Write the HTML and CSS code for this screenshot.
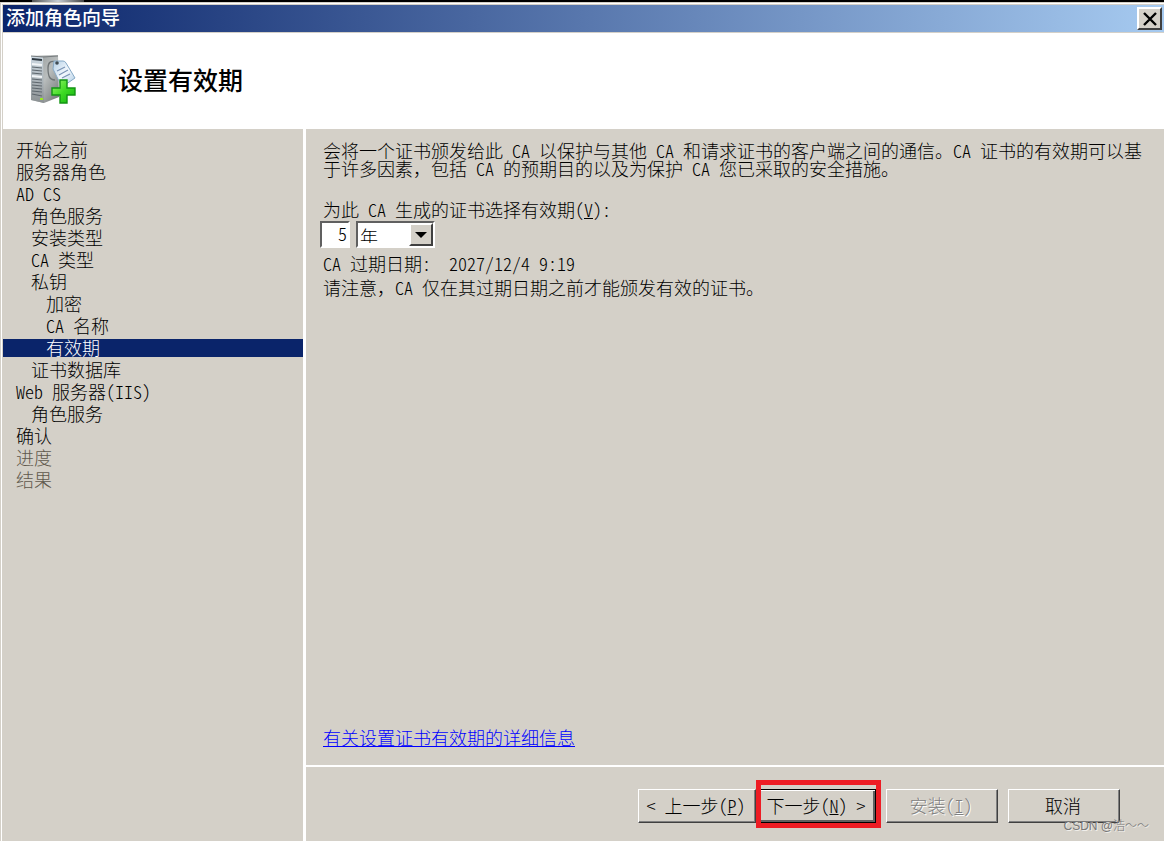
FILE: index.html
```html
<!DOCTYPE html>
<html lang="zh-CN">
<head>
  <meta charset="UTF-8">
  <meta name="viewport" content="width=device-width, initial-scale=1.0">
  <title>添加角色向导</title>
  <link rel="stylesheet" href="styles.css">
</head>
<body>

  <div class="desktop"><span class="desktop-icon"></span></div>

  <div class="window">
    <!-- Title bar -->
    <div class="titlebar">
      <span class="titlebar-text">添加角色向导</span>
      <button class="close" type="button" aria-label="关闭">
        <svg width="14" height="14" viewBox="0 0 14 14"><path d="M1 1 L13 13 M13 1 L1 13" stroke="#000" stroke-width="2.4"/></svg>
      </button>
    </div>

    <!-- Header -->
    <header class="header">
      <svg class="header-icon" width="48" height="50" viewBox="0 0 48 50">
        <defs>
          <linearGradient id="side" x1="0" y1="0" x2="1" y2="1">
            <stop offset="0" stop-color="#8f9494"/>
            <stop offset="0.5" stop-color="#b9bdbd"/>
            <stop offset="1" stop-color="#6d7272"/>
          </linearGradient>
          <linearGradient id="front" x1="0" y1="0" x2="0" y2="1">
            <stop offset="0" stop-color="#cfdbe4"/>
            <stop offset="1" stop-color="#8b9092"/>
          </linearGradient>
          <linearGradient id="tag" x1="0" y1="0" x2="1" y2="1">
            <stop offset="0" stop-color="#b4cfe6"/>
            <stop offset="0.5" stop-color="#f2f8fd"/>
            <stop offset="1" stop-color="#a9c8e2"/>
          </linearGradient>
          <linearGradient id="plus" x1="0" y1="0" x2="1" y2="1">
            <stop offset="0" stop-color="#9af56c"/>
            <stop offset="0.5" stop-color="#3fdb24"/>
            <stop offset="1" stop-color="#10b010"/>
          </linearGradient>
        </defs>
        <path d="M1 1 L28 0 L29 42 L14 48 L1 45 Z" fill="url(#side)"/>
        <path d="M1 1 L13 2 L14 48 L1 45 Z" fill="url(#front)"/>
        <path d="M1 1 L13 2 L28 1" fill="none" stroke="#777c7e"/>
        <path d="M2 4 L12 5" stroke="#2f3a42" stroke-width="1.8"/>
        <path d="M2 12 L12 13 M2 15 L12 16 M2 18 L12 19 M2 24 L12 25 M2 27 L12 28 M2 30 L12 31 M2 33 L12 34 M2 36 L12 37 M2 39 L12 41" stroke="#5e676d" stroke-width="1.2"/>
        <path d="M2 9 L12 10 M2 21 L12 22" stroke="#f2f5f7" stroke-width="1.8"/>
        <rect x="10" y="43" width="3" height="2" fill="#9bea20"/>
        <path d="M27 7 C20 5 18 8 18 13 C18 20 19 25 25 25" fill="none" stroke="#6f7476" stroke-width="1.3"/>
        <path d="M24 6 L33 6 Q35 6 36 8 L45 23 L32 32 L23 14 Z" fill="url(#tag)" stroke="#86a9c6"/>
        <circle cx="27" cy="8" r="1.8" fill="#3f4a52"/>
        <path d="M27 16 L35 12 M29 20 L38 15 M32 23 L40 19" stroke="#7a93b4" stroke-width="1.2"/>
        <path d="M30 25 h7 v8 h8 v7 h-8 v8 h-7 v-8 h-8 v-7 h8 z" fill="url(#plus)" stroke="#139413" stroke-width="1.4"/>
      </svg>
      <h1 class="header-title">设置有效期</h1>
    </header>

    <div class="content">
      <!-- Steps -->
      <nav class="steps">
        <ul class="steps-list">
          <li>开始之前</li>
          <li>服务器角色</li>
          <li><span class="en">AD CS</span></li>
          <li class="level-2">角色服务</li>
          <li class="level-2">安装类型</li>
          <li class="level-2"><span class="en">CA </span>类型</li>
          <li class="level-2">私钥</li>
          <li class="level-3">加密</li>
          <li class="level-3"><span class="en">CA </span>名称</li>
          <li class="level-3 active">有效期</li>
          <li class="level-2">证书数据库</li>
          <li><span class="en">Web </span>服务器<span class="en">(IIS)</span></li>
          <li class="level-2">角色服务</li>
          <li>确认</li>
          <li class="disabled">进度</li>
          <li class="disabled">结果</li>
        </ul>
      </nav>

      <form class="main">
        <div class="panel">
          <p class="intro">会将一个证书颁发给此<span class="en"> CA </span>以保护与其他<span class="en"> CA </span>和请求证书的客户端之间的通信。<span class="en">CA </span>证书的有效期可以基于许多因素，包括<span class="en"> CA </span>的预期目的以及为保护<span class="en"> CA </span>您已采取的安全措施。</p>

          <label class="period-label" for="period">为此<span class="en"> CA </span>生成的证书选择有效期<span class="en">(<u>V</u>):</span></label>
          <div class="period">
            <input id="period" class="period-value en" type="text" value="5">
            <div class="select-box">
              <select class="period-unit" aria-label="单位">
                <option>年</option>
                <option>月</option>
                <option>周</option>
                <option>天</option>
              </select>
              <span class="select-arrow"></span>
            </div>
          </div>

          <p class="expires"><span class="en">CA </span>过期日期<span class="en">:&nbsp; 2027/12/4 9:19</span></p>
          <p class="note">请注意，<span class="en">CA </span>仅在其过期日期之前才能颁发有效的证书。</p>

          <a class="more" href="#">有关设置证书有效期的详细信息</a>
        </div>

        <!-- Buttons -->
        <div class="footer">
          <div class="footer-pair">
            <button class="btn btn-wide" type="button"><span class="en">&lt; </span>上一步<span class="en">(<u>P</u>)</span></button>
            <div class="marked">
              <button class="btn btn-wide btn-default" type="submit">下一步<span class="en">(<u>N</u>) &gt;</span></button>
            </div>
          </div>
          <button class="btn" type="button" disabled>安装<span class="en">(<u>I</u>)</span></button>
          <button class="btn" type="button">取消</button>
        </div>
      </form>
    </div>
  </div>

  <span class="watermark">CSDN @浩～～</span>

</body>
</html>
```
FILE: styles.css
```css
* {
  box-sizing: border-box;
}
body {
  margin: 0;
  min-height: 100vh;
  display: flex;
  flex-direction: column;
  position: relative;
  font-family: "Noto Sans CJK SC", sans-serif;
  font-size: 18px;
  font-weight: 300;
  line-height: 18px;
  color: #000;
  background: #d4d0c8;
}
p, h1, ul {
  margin: 0;
  padding: 0;
}

/* half-width latin forms */
.en {
  font-feature-settings: "hwid";
  white-space: pre-wrap;
}

.desktop {
  height: 2px;
  padding-left: 32px;
  background: #000;
}
.desktop-icon {
  display: block;
  width: 52px;
  height: 2px;
  background: linear-gradient(to right, #555, #c5ccd2, #444);
}

.window {
  flex: 1;
  display: flex;
  flex-direction: column;
  margin-top: 1px;
  border-top: 1px solid #fff;
  border-left: 1px solid #fff;
  padding: 1px 0 0 1px;
  margin-left: 1px;
}

.titlebar {
  display: flex;
  align-items: center;
  justify-content: space-between;
  height: 27px;
  padding: 0 2px 0 3px;
  background: linear-gradient(to right, #0a246a, #a6caf0);
}
.titlebar-text {
  padding-bottom: 3px;
  color: #fff;
  font-size: 19px;
  font-weight: 500;
}
.close {
  display: flex;
  align-items: center;
  justify-content: center;
  width: 25px;
  height: 23px;
  padding: 0;
  background: #d4d0c8;
  border: 2px solid;
  border-color: #fff #404040 #404040 #fff;
}

.header {
  display: flex;
  align-items: center;
  gap: 40px;
  height: 96px;
  margin-top: 1px;
  padding: 0 0 2px 27px;
  background: #fff;
}
.header-title {
  padding-bottom: 2px;
  font-size: 25px;
  font-weight: 500;
  line-height: 30px;
}

.content {
  flex: 1;
  display: flex;
}

.steps {
  width: 303px;
  padding-top: 12px;
  border-right: 3px solid #fff;
}
.steps-list {
  display: flex;
  flex-direction: column;
  gap: 4px;
  list-style: none;
}
.steps-list li {
  height: 18px;
  padding-left: 13px;
  line-height: 16px;
  white-space: nowrap;
}
.steps-list .level-2 {
  padding-left: 28px;
}
.steps-list .level-3 {
  padding-left: 43px;
}
.steps-list .active {
  color: #fff;
  background: #0a246a;
}
.steps-list .disabled {
  color: #5f584c;
}

.main {
  flex: 1;
  display: flex;
  flex-direction: column;
}
.panel {
  flex: 1;
  display: flex;
  flex-direction: column;
  align-items: flex-start;
  padding: 12px 16px 19px 17px;
}
.period-label {
  margin-top: 23px;
}
.period {
  display: flex;
  gap: 6px;
  margin: 3px 0 0 -3px;
}
.period-value,
.period-unit {
  height: 27px;
  border: 2px solid;
  border-color: #606060 #fff #fff #606060;
  border-radius: 0;
  background: #fff;
  color: #000;
  font-family: inherit;
  font-size: 18px;
  font-weight: 300;
  outline: none;
}
.period-value {
  width: 30px;
  padding: 0 1px 3px;
  text-align: right;
}
.select-box {
  position: relative;
}
.period-unit {
  width: 79px;
  padding: 0 2px 3px;
  appearance: none;
}
.select-arrow {
  position: absolute;
  top: 2px;
  right: 2px;
  width: 24px;
  height: 23px;
  background: #d4d0c8;
  border: 2px solid;
  border-color: #fff #404040 #404040 #fff;
  pointer-events: none;
}
.select-arrow::after {
  content: "";
  display: block;
  margin: 7px auto 0;
  width: 12px;
  height: 6px;
  background: #000;
  clip-path: polygon(0 0, 100% 0, 50% 100%);
}
.expires {
  margin-top: 6px;
}
.note {
  margin-top: 6px;
}
.more {
  margin-top: auto;
  color: #00f;
}

.footer {
  display: flex;
  justify-content: flex-end;
  gap: 10px;
  padding: 22px 44px 18px;
  border-top: 2px solid #fff;
}
.footer-pair {
  display: flex;
  gap: 2px;
}
.btn {
  width: 112px;
  height: 34px;
  padding: 0 2px 2px 0;
  font: inherit;
  color: #000;
  white-space: nowrap;
  background: #d4d0c8;
  border: 1px solid;
  border-color: #fff #404040 #404040 #fff;
  box-shadow: inset -1px -1px #808080;
}
.btn-wide {
  width: 118px;
}
.btn-default {
  border-color: #000;
  box-shadow: inset 1px 1px #fff, inset -2px -2px #606060;
}
.btn:disabled {
  color: #808080;
  text-shadow: 1px 1px #fff;
}

/* red frame round the next button */
.marked {
  position: relative;
}
.marked::after {
  content: "";
  position: absolute;
  inset: -9px -5px -5px -2px;
  border: 5px solid #ed1c24;
  pointer-events: none;
}

.watermark {
  position: absolute;
  right: 15px;
  bottom: 6px;
  font-family: "Liberation Sans", "Noto Sans CJK SC", sans-serif;
  font-size: 12px;
  color: #777;
  text-shadow: 1px 1px #f0eeea;
}
```
